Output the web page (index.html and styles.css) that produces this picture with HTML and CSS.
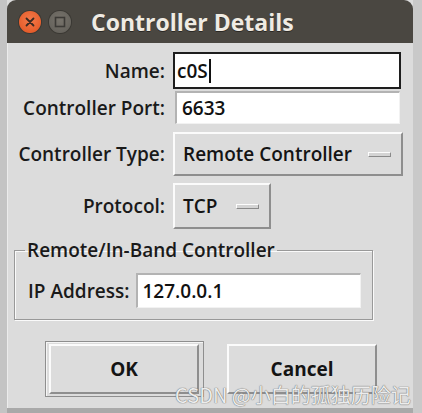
FILE: index.html
```html
<!DOCTYPE html>
<html>
<head>
<meta charset="utf-8">
<link rel="stylesheet" href="styles.css">
</head>
<body>
<div class="desk">
  <div class="window">
    <div class="titlebar">
      <span class="wbtn close"><svg width="22" height="22" viewBox="0 0 22 22"><path d="M7.5 7.5 L14.5 14.5 M14.5 7.5 L7.5 14.5" stroke="#3a2a22" stroke-width="1.8" stroke-linecap="round"/></svg></span>
      <span class="wbtn mini"><svg width="22" height="22" viewBox="0 0 22 22"><rect x="6.5" y="6.5" width="9" height="9" fill="none" stroke="#3c3a36" stroke-width="1.6"/></svg></span>
      <span class="title">Controller Details</span>
    </div>
    <div class="content">
      <div class="form">
        <label class="lbl r-name">Name:</label>
        <div class="entry focus r-name"><span>c0S</span><span class="caret"></span></div>
        <label class="lbl r-port">Controller Port:</label>
        <div class="entry sunken r-port">6633</div>
        <label class="lbl r-type">Controller Type:</label>
        <div class="menubtn r-type type">Remote Controller<span class="ind"></span></div>
        <label class="lbl r-proto">Protocol:</label>
        <div class="menubtn r-proto proto">TCP<span class="ind"></span></div>
      </div>
      <fieldset class="frame">
        <legend>Remote/In-Band Controller</legend>
        <div class="iprow">
          <label class="lbl">IP Address:</label>
          <div class="entry sunken ip">127.0.0.1</div>
        </div>
      </fieldset>
      <div class="buttons">
        <div class="focusring"><div class="btn">OK</div></div>
        <div class="btn cancel">Cancel</div>
      </div>
    </div>
  </div>
  <div class="watermark">CSDN @小白的孤独历险记</div>
</div>
</body>
</html>
```
FILE: styles.css
```css
html, body {
  margin: 0;
  padding: 0;
}
body {
  width: 422px;
  height: 413px;
  overflow: hidden;
  background: #a9a9a9;
  font-family: "Open Sans", "Noto Sans", sans-serif;
}
.desk {
  position: relative;
  width: 422px;
  height: 413px;
  background: linear-gradient(to right, #c4c4c4 0 7px, transparent 7px 413px, #c9c9c9 413px);
  display: flex;
}
.window {
  margin-left: 7px;
  width: 406px;
  height: 408px;
  display: flex;
  flex-direction: column;
  background: #dcdcdc;
}
.titlebar {
  height: 43px;
  flex: none;
  background: #4a4741;
  border-radius: 9px 9px 0 0;
  display: flex;
  align-items: center;
  padding-left: 12px;
  box-sizing: border-box;
}
.wbtn {
  width: 22px;
  height: 22px;
  border-radius: 50%;
  display: block;
  margin-right: 8px;
}
.wbtn svg { display: block; }
.close {
  background: radial-gradient(circle at 50% 40%, #f47a4a, #e0521f);
  box-shadow: 0 0 0 1px #3a3833;
}
.mini {
  background: radial-gradient(circle at 50% 40%, #77736b, #605d57);
  box-shadow: 0 0 0 1px #3a3833;
}
.title {
  margin-left: 12px;
  color: #efebe3;
  font-weight: 700;
  font-size: 23px;
  text-shadow: 0 1px 0 #2a2824;
}
.content {
  flex: 1;
  border-left: 1px solid #ececec;
  background: #dcdcdc;
  padding-top: 9px;
  box-sizing: border-box;
  position: relative;
}
.form {
  display: grid;
  grid-template-columns: 157px 1fr;
  column-gap: 8px;
  align-items: center;
}
.lbl {
  text-align: right;
  font-size: 19px;
  font-weight: 600;
  color: #1a1a1a;
  white-space: nowrap;
}
.entry {
  background: #fff;
  font-size: 19px;
  font-weight: 600;
  color: #111;
  box-sizing: border-box;
  display: flex;
  align-items: center;
  padding-left: 6px;
}
.focus {
  width: 228px;
  height: 37px;
  border: 2px solid #1e1e1e;
  padding-left: 2px;
}
.caret {
  display: inline-block;
  width: 2px;
  height: 24px;
  background: #111;
  margin-left: 1px;
}
.sunken {
  border-top: 2px solid #b3b3b3;
  border-left: 2px solid #b3b3b3;
  border-right: 1px solid #f2f2f2;
  border-bottom: 1px solid #f2f2f2;
}
.r-port.entry {
  margin-top: 2px;
  margin-left: 2px;
  width: 225px;
  height: 33px;
  padding-left: 5px;
}
.menubtn {
  box-sizing: border-box;
  font-size: 19px;
  font-weight: 600;
  color: #141414;
  background: #dcdcdc;
  border-top: 2px solid #fbfbfb;
  border-left: 2px solid #fbfbfb;
  border-right: 2px solid #8e8e8e;
  border-bottom: 2px solid #8e8e8e;
  display: flex;
  align-items: center;
  padding-left: 8px;
  padding-right: 10px;
  justify-content: space-between;
}
.type {
  margin-top: 8px;
  width: 230px;
  height: 44px;
}
.proto {
  margin-top: 7px;
  width: 98px;
  height: 46px;
}
.lbl.r-type { margin-top: 8px; }
.lbl.r-proto { margin-top: 7px; }
.lbl.r-port { margin-top: 2px; }
.ind {
  display: block;
  width: 23px;
  height: 5px;
  box-sizing: border-box;
  background: #d4d4d4;
  border-top: 1px solid #fdfdfd;
  border-left: 1px solid #fdfdfd;
  border-right: 1px solid #8a8a8a;
  border-bottom: 1px solid #8a8a8a;
}
.frame {
  margin: 8px 0 0 6px;
  width: 359px;
  height: 83px;
  box-sizing: border-box;
  padding: 10px 0 0 13px;
  border: 1px solid #999;
  box-shadow: inset 1px 1px 0 #fafafa, 1px 1px 0 #fafafa;
}
.frame legend {
  font-size: 19px;
  font-weight: 600;
  color: #1a1a1a;
  padding: 0 2px;
  margin-left: -3px;
}
.iprow {
  display: flex;
  align-items: center;
  gap: 6px;
}
.ip {
  width: 225px;
  height: 35px;
  padding-left: 5px;
}
.buttons {
  display: flex;
  align-items: center;
  margin-top: 21px;
  padding-left: 37px;
  gap: 23px;
}
.focusring {
  box-sizing: border-box;
  width: 159px;
  height: 56px;
  padding: 2px 3px;
  border: 1px solid #8e8e8e;
  box-shadow: inset 1px 1px 0 #f5f5f5;
}
.btn {
  box-sizing: border-box;
  width: 150px;
  height: 50px;
  display: flex;
  align-items: center;
  justify-content: center;
  font-size: 19px;
  font-weight: 700;
  color: #141414;
  border-top: 2px solid #fbfbfb;
  border-left: 2px solid #fbfbfb;
  border-right: 2px solid #8e8e8e;
  border-bottom: 2px solid #8e8e8e;
}
.watermark {
  position: absolute;
  left: 175px;
  top: 380px;
  font-family: "Noto Sans CJK SC", sans-serif;
  font-size: 20px;
  color: #ececec;
  text-shadow: 0 0 1px #6f6f6f, 0 0 1px #6f6f6f;
  white-space: nowrap;
}
```
